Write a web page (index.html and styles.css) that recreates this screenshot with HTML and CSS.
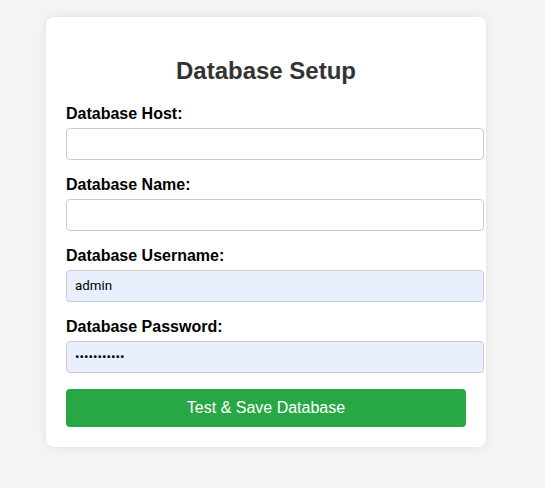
FILE: index.html
```html
<!DOCTYPE html>
<html>
<head>
<meta charset="utf-8">
<link rel="stylesheet" href="styles.css">
</head>
<body>
<div class="card">
  <h2 class="title">Database Setup</h2>
  <form class="form">
    <label class="label">Database Host:</label>
    <input class="field" type="text">
    <label class="label">Database Name:</label>
    <input class="field" type="text">
    <label class="label">Database Username:</label>
    <input class="field filled" type="text" value="admin">
    <label class="label">Database Password:</label>
    <input class="field filled" type="password" value="12345678901">
    <button class="btn" type="button">Test &amp; Save Database</button>
  </form>
</div>
</body>
</html>
```

FILE: styles.css
```css
html, body {
  margin: 0;
  background: #f4f4f4;
  font-family: "Liberation Sans", Arial, sans-serif;
}
body {
  padding: 17px 0 0 46px;
  height: 488px;
  box-sizing: border-box;
}
.card {
  width: 400px;
  padding: 20px;
  background: #fff;
  border-radius: 8px;
  box-shadow: 0 0 10px rgba(0, 0, 0, 0.08);
}
.title {
  margin: 20px 0 20px;
  font-size: 24px;
  line-height: 27.6px;
  text-align: center;
  color: #333;
}
.form {
  display: flex;
  flex-direction: column;
  margin: 0;
}
.label {
  display: block;
  font-size: 16px;
  font-weight: bold;
  line-height: 18px;
  margin-bottom: 5px;
  color: #000;
}
.field {
  box-sizing: border-box;
  width: 418px;
  height: 32px;
  margin: 0 0 16px;
  padding: 0 8px;
  border: 1px solid #ccc;
  border-radius: 4px;
  background: #fff;
  font-family: Roboto, "Liberation Sans", sans-serif;
  font-size: 13.33px;
  color: #000;
  outline: none;
}
.field.filled {
  background: #e8f0fe;
}
.btn {
  margin-top: 0;
  width: 400px;
  height: 38px;
  border: none;
  border-radius: 4px;
  background: #28a745;
  color: #fff;
  font-family: "Liberation Sans", Arial, sans-serif;
  font-size: 16px;
  cursor: pointer;
}
```
